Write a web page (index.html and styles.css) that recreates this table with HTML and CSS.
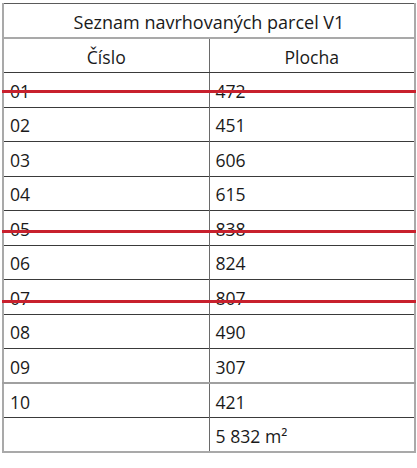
FILE: index.html
```html
<!DOCTYPE html>
<html lang="cs">
<head>
<meta charset="utf-8">
<title>Seznam navrhovaných parcel V1</title>
<link rel="stylesheet" href="styles.css">
</head>
<body>
<table class="parcels">
  <thead>
    <tr class="title-row"><th colspan="2">Seznam navrhovaných parcel V1</th></tr>
    <tr class="head-row"><th>Číslo</th><th>Plocha</th></tr>
  </thead>
  <tbody>
    <tr class="struck struck-a"><td>01</td><td>472</td></tr>
    <tr><td>02</td><td>451</td></tr>
    <tr><td>03</td><td>606</td></tr>
    <tr><td>04</td><td>615</td></tr>
    <tr class="struck struck-b"><td>05</td><td>838</td></tr>
    <tr><td>06</td><td>824</td></tr>
    <tr class="struck struck-c"><td>07</td><td>807</td></tr>
    <tr><td>08</td><td>490</td></tr>
    <tr class="grey-below"><td>09</td><td>307</td></tr>
    <tr><td>10</td><td>421</td></tr>
    <tr class="total"><td></td><td>5&nbsp;832 m²</td></tr>
  </tbody>
</table>
</body>
</html>
```

FILE: styles.css
```css
html, body {
  margin: 0;
  padding: 0;
  background: #ffffff;
}

body {
  padding: 3px 0 0 2px;
  font-family: "Open Sans", "Noto Sans", "DejaVu Sans", sans-serif;
  font-size: 17.6px;
  color: #1a1a1a;
}

.parcels {
  border-collapse: collapse;
  width: 414px;
  table-layout: fixed;
  border-left: 2px solid #a9a9a9;
  border-right: 2px solid #a9a9a9;
  border-bottom: 2px solid #a9a9a9;
  border-top: 1px solid #5a5a5a;
}

.parcels th,
.parcels td {
  height: 34.5px;
  padding: 2px 6px 0 6px;
  box-sizing: border-box;
  font-weight: normal;
  line-height: 20px;
  vertical-align: middle;
}

.parcels th {
  text-align: center;
}

.parcels td {
  text-align: left;
  border-top: 1px solid #3a3a3a;
}

.parcels td:first-child,
.parcels .head-row th:first-child {
  width: 206px;
  border-right: 1px solid #6a6a6a;
}

.title-row th {
  border-bottom: 2px solid #a9a9a9;
  font-size: 18px;
}

.head-row th {
  border-bottom: 1px solid #3a3a3a;
}

.grey-below td {
  border-bottom: 2px solid #a0a0a0;
}

.struck td {
  position: relative;
}

.struck td::after {
  content: "";
  position: absolute;
  left: -2px;
  right: -2px;
  height: 3px;
  background: #c8202d;
}

.struck-a td::after {
  top: 17px;
}

.struck-b td::after {
  top: 19px;
}

.struck-c td::after {
  top: 20px;
}
```
